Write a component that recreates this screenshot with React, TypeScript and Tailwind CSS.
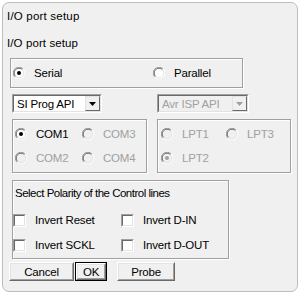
import React from "react";

const font = { fontFamily: '"Liberation Sans", Arial, sans-serif' };

function Radio({ checked, disabled }: { checked?: boolean; disabled?: boolean }) {
  return (
    <svg width="12" height="12" viewBox="0 0 12 12" className="shrink-0">
      <circle cx="6" cy="6" r="5.5" fill={disabled ? "#f0f0f0" : "#ffffff"} />
      <path d="M1.9 10.1 A5.5 5.5 0 0 1 10.1 1.9" fill="none" stroke="#a0a0a0" strokeWidth="1" />
      <path d="M10.1 1.9 A5.5 5.5 0 0 1 1.9 10.1" fill="none" stroke="#ffffff" strokeWidth="1" />
      <path d="M2.6 9.4 A4.5 4.5 0 0 1 9.4 2.6" fill="none" stroke="#696969" strokeWidth="1" />
      <path d="M9.4 2.6 A4.5 4.5 0 0 1 2.6 9.4" fill="none" stroke="#e3e3e3" strokeWidth="1" />
      {checked && <circle cx="6" cy="6" r="2" fill={disabled ? "#a0a0a0" : "#000000"} />}
    </svg>
  );
}

function Check() {
  return (
    <div className="w-[13px] h-[13px] shrink-0 border border-t-[#a0a0a0] border-l-[#a0a0a0] border-b-white border-r-white">
      <div className="w-full h-full bg-white border border-t-[#696969] border-l-[#696969] border-b-[#e3e3e3] border-r-[#e3e3e3]" />
    </div>
  );
}

function Group({ className, children }: { className: string; children?: React.ReactNode }) {
  return (
    <div className={"border border-[#a0a0a0] shadow-[inset_1px_1px_0_#ffffff,1px_1px_0_#ffffff] " + className}>
      {children}
    </div>
  );
}

const txt = "text-[11.5px] tracking-[-0.2px] leading-[14px]";

function Combo({ label, disabled, className }: { label: string; disabled?: boolean; className: string }) {
  return (
    <div className={"h-[19px] flex border border-t-[#a0a0a0] border-l-[#a0a0a0] border-b-white border-r-white " + className}>
      <div className={"flex-1 flex border border-t-[#696969] border-l-[#696969] border-b-[#e3e3e3] border-r-[#e3e3e3] " + (disabled ? "bg-[#f0f0f0]" : "bg-white")}>
        <div className={"flex-1 pl-[3px] pt-[1px] " + txt + " " + (disabled ? "text-[#a0a0a0]" : "text-black")}>{label}</div>
        <div className="w-[15px] h-[15px] flex items-center justify-center border border-t-[#e3e3e3] border-l-[#e3e3e3] border-b-[#696969] border-r-[#696969] bg-[#f0f0f0]">
          <svg width="7" height="4" viewBox="0 0 7 4">
            <path d="M0 0 H7 L3.5 4 Z" fill={disabled ? "#a0a0a0" : "#000"} />
          </svg>
        </div>
      </div>
    </div>
  );
}

function RadioItem({ label, checked, disabled, className }: { label: string; checked?: boolean; disabled?: boolean; className?: string }) {
  return (
    <div className={"flex items-center " + (className || "")}>
      <Radio checked={checked} disabled={disabled} />
      <span className={"ml-[9px] " + txt + " " + (disabled ? "text-[#a0a0a0]" : "text-black")}>{label}</span>
    </div>
  );
}

function CheckItem({ label, className }: { label: string; className?: string }) {
  return (
    <div className={"flex items-center " + (className || "")}>
      <Check />
      <span className={"ml-[9px] text-black " + txt}>{label}</span>
    </div>
  );
}

function Button({ label, className, def }: { label: string; className: string; def?: boolean }) {
  const inner = (
    <div className="w-full h-full border border-t-white border-l-white border-b-[#696969] border-r-[#696969]">
      <div className={"w-full h-full flex items-center justify-center border border-t-[#e3e3e3] border-l-[#e3e3e3] border-b-[#a0a0a0] border-r-[#a0a0a0] text-black " + txt}>
        {label}
      </div>
    </div>
  );
  return def ? (
    <div className={"border border-black " + className}>{inner}</div>
  ) : (
    <div className={className}>{inner}</div>
  );
}

export default function App() {
  return (
    <div className="w-[303px] h-[295px] bg-white p-[2px]" style={font}>
      <div className="h-[290px] w-[296px] border border-[#bdbdbd] rounded-[7px] bg-[#f0f0f0] flex flex-col">
        <div className="ml-[4px] mt-[6px] text-black text-[11.5px] tracking-[0.2px] leading-[14px]">I/O port setup</div>
        <div className="ml-[4px] mt-[13px] text-black text-[11.5px] tracking-[0.1px] leading-[14px]">I/O port setup</div>
        <Group className="ml-[7px] mt-[8px] w-[233px] h-[30px] flex items-center">
          <RadioItem label="Serial" checked className="ml-[2px] w-[140px]" />
          <RadioItem label="Parallel" />
        </Group>
        <div className="flex mt-[6px]">
          <Combo label="SI Prog API" className="ml-[9px] w-[90px]" />
          <Combo label="Avr ISP API" disabled className="ml-[55px] w-[92px]" />
        </div>
        <div className="flex mt-[6px]">
          <Group className="ml-[9px] w-[135px] h-[54px] flex flex-col justify-center gap-[10px]">
            <div className="flex">
              <RadioItem label="COM1" checked className="ml-[2px] w-[67px]" />
              <RadioItem label="COM3" disabled />
            </div>
            <div className="flex">
              <RadioItem label="COM2" disabled className="ml-[2px] w-[67px]" />
              <RadioItem label="COM4" disabled />
            </div>
          </Group>
          <Group className="ml-[10px] w-[134px] h-[54px] flex flex-col justify-center gap-[10px]">
            <div className="flex">
              <RadioItem label="LPT1" disabled className="ml-[3px] w-[65px]" />
              <RadioItem label="LPT3" disabled />
            </div>
            <div className="flex">
              <RadioItem label="LPT2" checked disabled className="ml-[3px]" />
            </div>
          </Group>
        </div>
        <Group className="ml-[9px] mt-[7px] w-[217px] h-[79px] flex flex-col">
          <div className="ml-[2px] mt-[5px] text-black text-[11.5px] tracking-[-0.5px] leading-[14px]">Select Polarity of the Control lines</div>
          <div className="flex mt-[13px]">
            <CheckItem label="Invert Reset" className="w-[108px]" />
            <CheckItem label="Invert D-IN" />
          </div>
          <div className="flex mt-[11px]">
            <CheckItem label="Invert SCKL" className="w-[108px]" />
            <CheckItem label="Invert D-OUT" />
          </div>
        </Group>
        <div className="flex mt-[3px]">
          <Button label="Cancel" className="ml-[6px] w-[65px] h-[19px]" />
          <Button label="OK" def className="ml-[1px] w-[32px] h-[19px]" />
          <Button label="Probe" className="ml-[10px] w-[58px] h-[19px]" />
        </div>
      </div>
    </div>
  );
}
